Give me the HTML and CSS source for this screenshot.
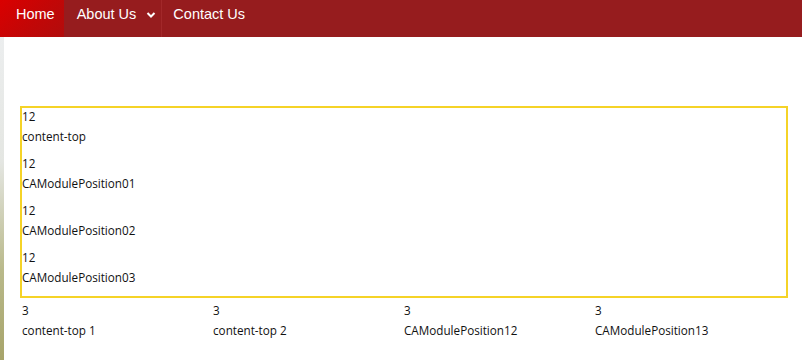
FILE: index.html
```html
<!DOCTYPE html>
<html lang="en">
<head>
    <meta charset="UTF-8">
    <meta name="viewport" content="width=device-width, initial-scale=1.0">
    <title>Layout Positions</title>
    <link rel="stylesheet" href="styles.css">
</head>
<body>
    <nav class="main-nav">
        <ul class="menu">
            <li class="menu-item active"><a href="#">Home</a></li>
            <li class="menu-item has-sub">
                <a href="#">About Us</a>
                <svg class="caret" width="10" height="8" viewBox="0 0 10 8"><path d="M1.5 2 L5 5.5 L8.5 2" fill="none" stroke="#fff" stroke-width="2"/></svg>
            </li>
            <li class="menu-item"><a href="#">Contact Us</a></li>
        </ul>
    </nav>

    <div class="page">
        <div class="content-area">
            <div class="module-box">
                <div class="module">
                    <div class="module-size">12</div>
                    <p class="module-name">content-top</p>
                </div>
                <div class="module">
                    <div class="module-size">12</div>
                    <p class="module-name">CAModulePosition01</p>
                </div>
                <div class="module">
                    <div class="module-size">12</div>
                    <p class="module-name">CAModulePosition02</p>
                </div>
                <div class="module">
                    <div class="module-size">12</div>
                    <p class="module-name">CAModulePosition03</p>
                </div>
            </div>

            <div class="module-row">
                <div class="module">
                    <div class="module-size">3</div>
                    <p class="module-name">content-top 1</p>
                </div>
                <div class="module">
                    <div class="module-size">3</div>
                    <p class="module-name">content-top 2</p>
                </div>
                <div class="module">
                    <div class="module-size">3</div>
                    <p class="module-name">CAModulePosition12</p>
                </div>
                <div class="module">
                    <div class="module-size">3</div>
                    <p class="module-name">CAModulePosition13</p>
                </div>
            </div>
        </div>
    </div>
</body>
</html>
```

FILE: styles.css
```css
html, body {
    height: 100%;
}

body {
    margin: 0;
    font-family: "Open Sans", "Noto Sans", sans-serif;
    font-size: 11.7px;
    color: #111;
    background: linear-gradient(to bottom, #eef0f2 0%, #e4e6e2 45%, #b9b98a 75%, #a7a46a 100%);
    overflow: hidden;
}

.main-nav {
    background-color: #961c1e;
    height: 37px;
}

.menu {
    list-style: none;
    margin: 0;
    padding: 0;
    display: flex;
    height: 100%;
}

.menu-item {
    display: flex;
    align-items: flex-start;
    padding: 5px 12px 0 11px;
    white-space: nowrap;
}

.menu-item a {
    font-family: "Liberation Sans", Arial, sans-serif;
    font-size: 14.5px;
    color: #fff;
    text-decoration: none;
    line-height: 18px;
}

.menu-item.active {
    background: linear-gradient(135deg, #da0000 0%, #c40606 50%, #b10c0c 100%);
    padding: 5px 9px 0 16px;
}

.menu-item.has-sub {
    padding: 5px 5px 0 13px;
    border-right: 1px solid #a2282a;
}

.caret {
    margin: 6px 0 0 10px;
}

.page {
    margin-left: 4px;
    background-color: #fff;
    height: 323px;
    box-sizing: border-box;
    padding: 69px 14px 0 16px;
}

.content-area {
    width: 768px;
}

.module-box {
    border: 2px solid #f5d327;
}

.module {
    padding-bottom: 9px;
}

.module-size {
    line-height: 16px;
    margin-bottom: 2px;
}

.module-name {
    margin: 0;
    line-height: 20px;
}

.module-row {
    display: grid;
    grid-template-columns: repeat(4, 1fr);
    padding: 4px 2px 0;
}
```
